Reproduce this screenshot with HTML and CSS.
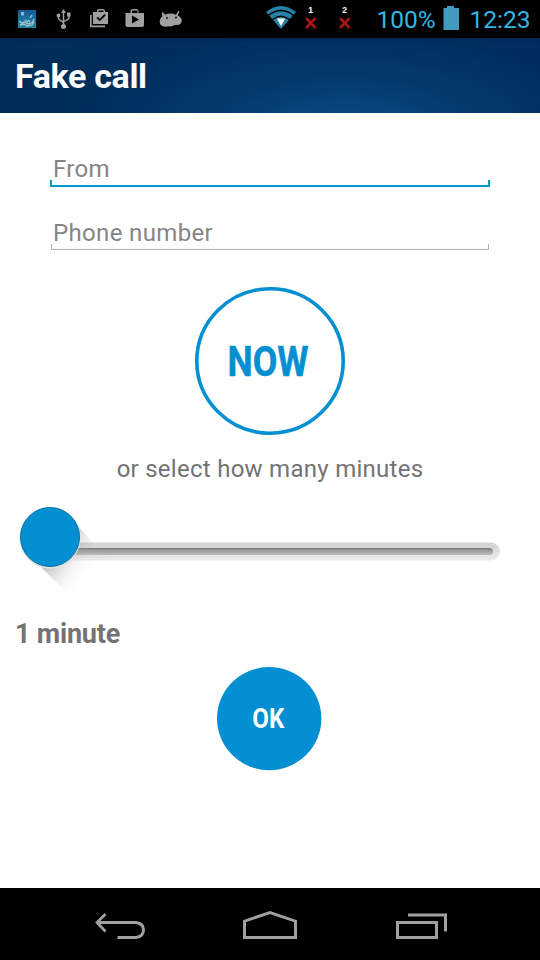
FILE: index.html
```html
<!DOCTYPE html>
<html lang="en">
<head>
<meta charset="utf-8">
<title>Fake call</title>
<link rel="stylesheet" href="styles.css">
</head>
<body>
<div class="screen">
  <div class="status">
    <svg class="status-icons" width="370" height="38" viewBox="0 0 370 38">
      <defs><linearGradient id="pic" x2="0" y2="1"><stop stop-color="#155b96"/><stop offset="1" stop-color="#188ba8"/></linearGradient></defs>
      <rect x="18" y="10" width="18" height="18" fill="url(#pic)"/>
      <g fill="none" stroke="#a9c2cc" stroke-width="1.3">
        <path d="M19 21l3 2 3-1 3 2 4-1 2-4M20 25l4-1 3 2 5-1 2-3M28 20l2 2M32 15l-2 3M25 20l3 2"/>
      </g>
      <ellipse cx="22.5" cy="13.8" rx="1.5" ry="2" fill="#a9c2cc"/>
      <g fill="none" stroke="#a0a0a0" stroke-width="1.5">
        <path d="M63.5 12v14M58.500 15v3q0 1.500 5 4.500M69 14v3.500q0 2-5.500 4"/>
      </g>
      <g fill="#a0a0a0">
        <path d="M61 13l2.500-4 2.500 4zM67 12.500h3.500v4H67z"/><circle cx="58.500" cy="15.500" r="1.900"/><circle cx="63.500" cy="26.500" r="2.500"/>
        <path fill-rule="evenodd" d="M93 12h4v-1q0-2 2-2h4q2 0 2 2v1h3v12H93zM98.500 12h5v-1.500h-5zM96.500 18l3.300 3.300 6-6-1.300-1.300-4.700 4.700-2-2z"/>
        <path d="M90 15h1.700v10.500H105v1.700H90z"/>
        <path fill-rule="evenodd" d="M125.500 13h5v-2q0-2 2-2h4q2 0 2 2v2h5.500v12q0 2-2 2h-14.500q-2 0-2-2zM132 13h5.500v-2.500H132zM132 15.500v8l7-4z"/>
        <path d="M161.800 12.800l1-.7 2.200 2.700q5.500-2.500 11 0l2.500-4 1 .6-1.800 4q4 1.800 4 5 0 3.800-4 4.600l-3 0q-3 2-6 1.300l-3 .5q-5.500-.2-6-4.500-.2-3.700 2.700-6z"/>
      </g>
      <circle cx="167" cy="18" r=".9"/><circle cx="176" cy="17.500" r=".9"/>
      <path d="M266 12q15-12 30 0L281 29z" fill="#2583a8"/>
      <path d="M268.500 15.300q12.500-9.600 25 0M272.500 19.700q8.500-6.800 17 0" fill="none" stroke="#000" stroke-width="1.500"/>
      <path d="M277 18.500h8l-1.500 3-2.500 4.500-2.500-4.500z" fill="#fff"/>
      <path d="M306 18l9.500 10M315.500 18L306 28M340 18l9.500 10M349.500 18L340 28" stroke="#a91414" stroke-width="2.600"/>
      <text class="sim" x="308.300" y="13">1</text><text class="sim" x="342.200" y="13">2</text>
    </svg>
    <span class="percent">100%</span>
    <svg class="battery" width="16" height="24" viewBox="0 0 16 24"><path d="M.5 2H4V0h7v2h5v22H.5z" fill="#409bbf"/></svg>
    <span class="clock">12:23</span>
  </div>
  <header class="title-bar"><h1>Fake call</h1></header>
  <main>
    <div class="field active"><span>From</span></div>
    <div class="field second"><span>Phone number</span></div>
    <svg class="now" width="150" height="148" viewBox="0 0 150 148">
      <ellipse cx="75" cy="74" rx="73.200" ry="72.200" fill="#fff" stroke="#038fd1" stroke-width="3.600"/>
      <text x="32.500" y="88.600" textLength="81" lengthAdjust="spacingAndGlyphs">NOW</text>
    </svg>
    <p class="hint">or select how many minutes</p>
    <svg class="slider" width="540" height="100" viewBox="0 0 540 100">
      <defs>
        <linearGradient id="rail" x2="0" y2="1"><stop stop-color="#d2d2d2"/><stop offset=".35" stop-color="#dadada"/><stop offset="1" stop-color="#ececec"/></linearGradient>
        <linearGradient id="groove" x2="0" y2="1"><stop stop-color="#737373"/><stop offset=".3" stop-color="#999"/><stop offset="1" stop-color="#bdbdbd"/></linearGradient>
        <linearGradient id="shade" gradientUnits="userSpaceOnUse" x1="40" y1="65" x2="76" y2="101"><stop stop-color="#777" stop-opacity=".65"/><stop offset=".5" stop-color="#aaa" stop-opacity=".25"/><stop offset="1" stop-color="#fff" stop-opacity="0"/></linearGradient>
        <linearGradient id="fade" gradientUnits="userSpaceOnUse" x1="55" y1="0" x2="112" y2="0"><stop stop-color="#fff"/><stop offset="1" stop-color="#000"/></linearGradient>
        <mask id="right-fade"><rect width="540" height="100" fill="url(#fade)"/></mask>
      </defs>
      <rect x="30" y="47.500" width="470" height="18" rx="9" fill="url(#rail)"/>
      <rect x="40" y="53" width="453" height="7" rx="3.500" fill="url(#groove)"/>
      <path d="M31 62L68 99Q95 94 110 65L75 28z" fill="url(#shade)" mask="url(#right-fade)"/>
      <circle cx="50" cy="43.200" r="30.500" fill="#e5e5e5"/>
      <circle cx="50" cy="42" r="29.500" fill="#038fd1" stroke="#0872a6"/>
    </svg>
    <p class="duration">1 minute</p>
    <svg class="ok" width="105" height="104" viewBox="0 0 105 104">
      <ellipse cx="52.200" cy="51.600" rx="52.200" ry="51.600" fill="#038fd1"/>
      <text x="35.300" y="60.900" textLength="32" lengthAdjust="spacingAndGlyphs">OK</text>
    </svg>
  </main>
  <nav>
    <svg width="540" height="72" viewBox="0 0 540 72" fill="none" stroke="#a0a0a0" stroke-width="3">
      <path d="M105.500 26L97 34.500l8.500 9" stroke-width="2.700"/><path d="M98 34.500h38q7.500 1 7.500 7.500t-7.500 7.500h-18.500"/>
      <path d="M244.500 49.500V33.200L270 24.500l25.500 8.700v16.300z"/>
      <path d="M397.500 34.500h39v15h-39zM408 27h37.500v16.500"/>
    </svg>
  </nav>
</div>
</body>
</html>
```
FILE: styles.css
```css
* { box-sizing: border-box; }
body { margin: 0; background: #fff; font-family: Roboto, sans-serif; }
h1, p { margin: 0; }
svg { display: block; }
.screen { width: 540px; height: 960px; display: flex; flex-direction: column; overflow: hidden; }
.status { height: 38px; flex: none; background: #000; color: #33b5e5; display: flex; font-size: 24.500px; line-height: 39px; white-space: nowrap; }
.status-icons { flex: none; }
.sim { fill: #fff; font: 700 8.500px "Liberation Sans", sans-serif; }
.percent { width: 73px; padding-left: 6.500px; flex: none; }
.battery { margin-top: 6px; flex: none; }
.clock { padding-left: 10.500px; }
.title-bar { height: 75px; flex: none; padding: 0 15px; background: radial-gradient(ellipse 270px 100px at 345px 90px, #0b4c84, #053a6f 48%, transparent), linear-gradient(90deg, #002d58, #002e60 50%, #002c60); box-shadow: inset 0 3px 3px -2px #00224a; }
h1 { color: #fff; font-size: 34px; line-height: 77px; font-weight: 700; letter-spacing: -0.35px; }
main { height: 775px; flex: none; display: flex; flex-direction: column; padding-top: 41px; }
.field { width: 440px; height: 33px; margin: 0 50px; padding-left: 3px; color: #858585; font-size: 24px; line-height: 30px; letter-spacing: 0.35px; border-bottom: 2px solid #0099cc; background: linear-gradient(#0099cc, #0099cc) left bottom / 2px 5px no-repeat, linear-gradient(#0099cc, #0099cc) right bottom / 2px 5px no-repeat; }
.second { width: 438px; height: 32px; margin: 31px 51px 0; padding-left: 2px; border-bottom: 1px solid #b0b0b0; background: linear-gradient(#b0b0b0, #b0b0b0) left bottom / 1px 5px no-repeat, linear-gradient(#b0b0b0, #b0b0b0) right bottom / 1px 5px no-repeat; }
.now { margin: 37px auto 0; flex: none; }
.now text { fill: #038fd1; stroke: #038fd1; stroke-width: 0.5px; font: 700 42px Roboto, sans-serif; }
.hint { margin-top: 18px; height: 32px; text-align: center; font-size: 24px; line-height: 32px; letter-spacing: 0.27px; color: #737373; }
.slider { flex: none; margin-top: 10px; }
.duration { margin: 22px 0 0 15px; height: 34px; font-size: 27px; line-height: 34px; font-weight: 700; letter-spacing: -0.2px; color: #737373; }
.ok { margin: 16px 0 0 217px; flex: none; }
.ok text { fill: #fff; font: 700 28px Roboto, sans-serif; }
nav { height: 72px; flex: none; background: #000; }
```
